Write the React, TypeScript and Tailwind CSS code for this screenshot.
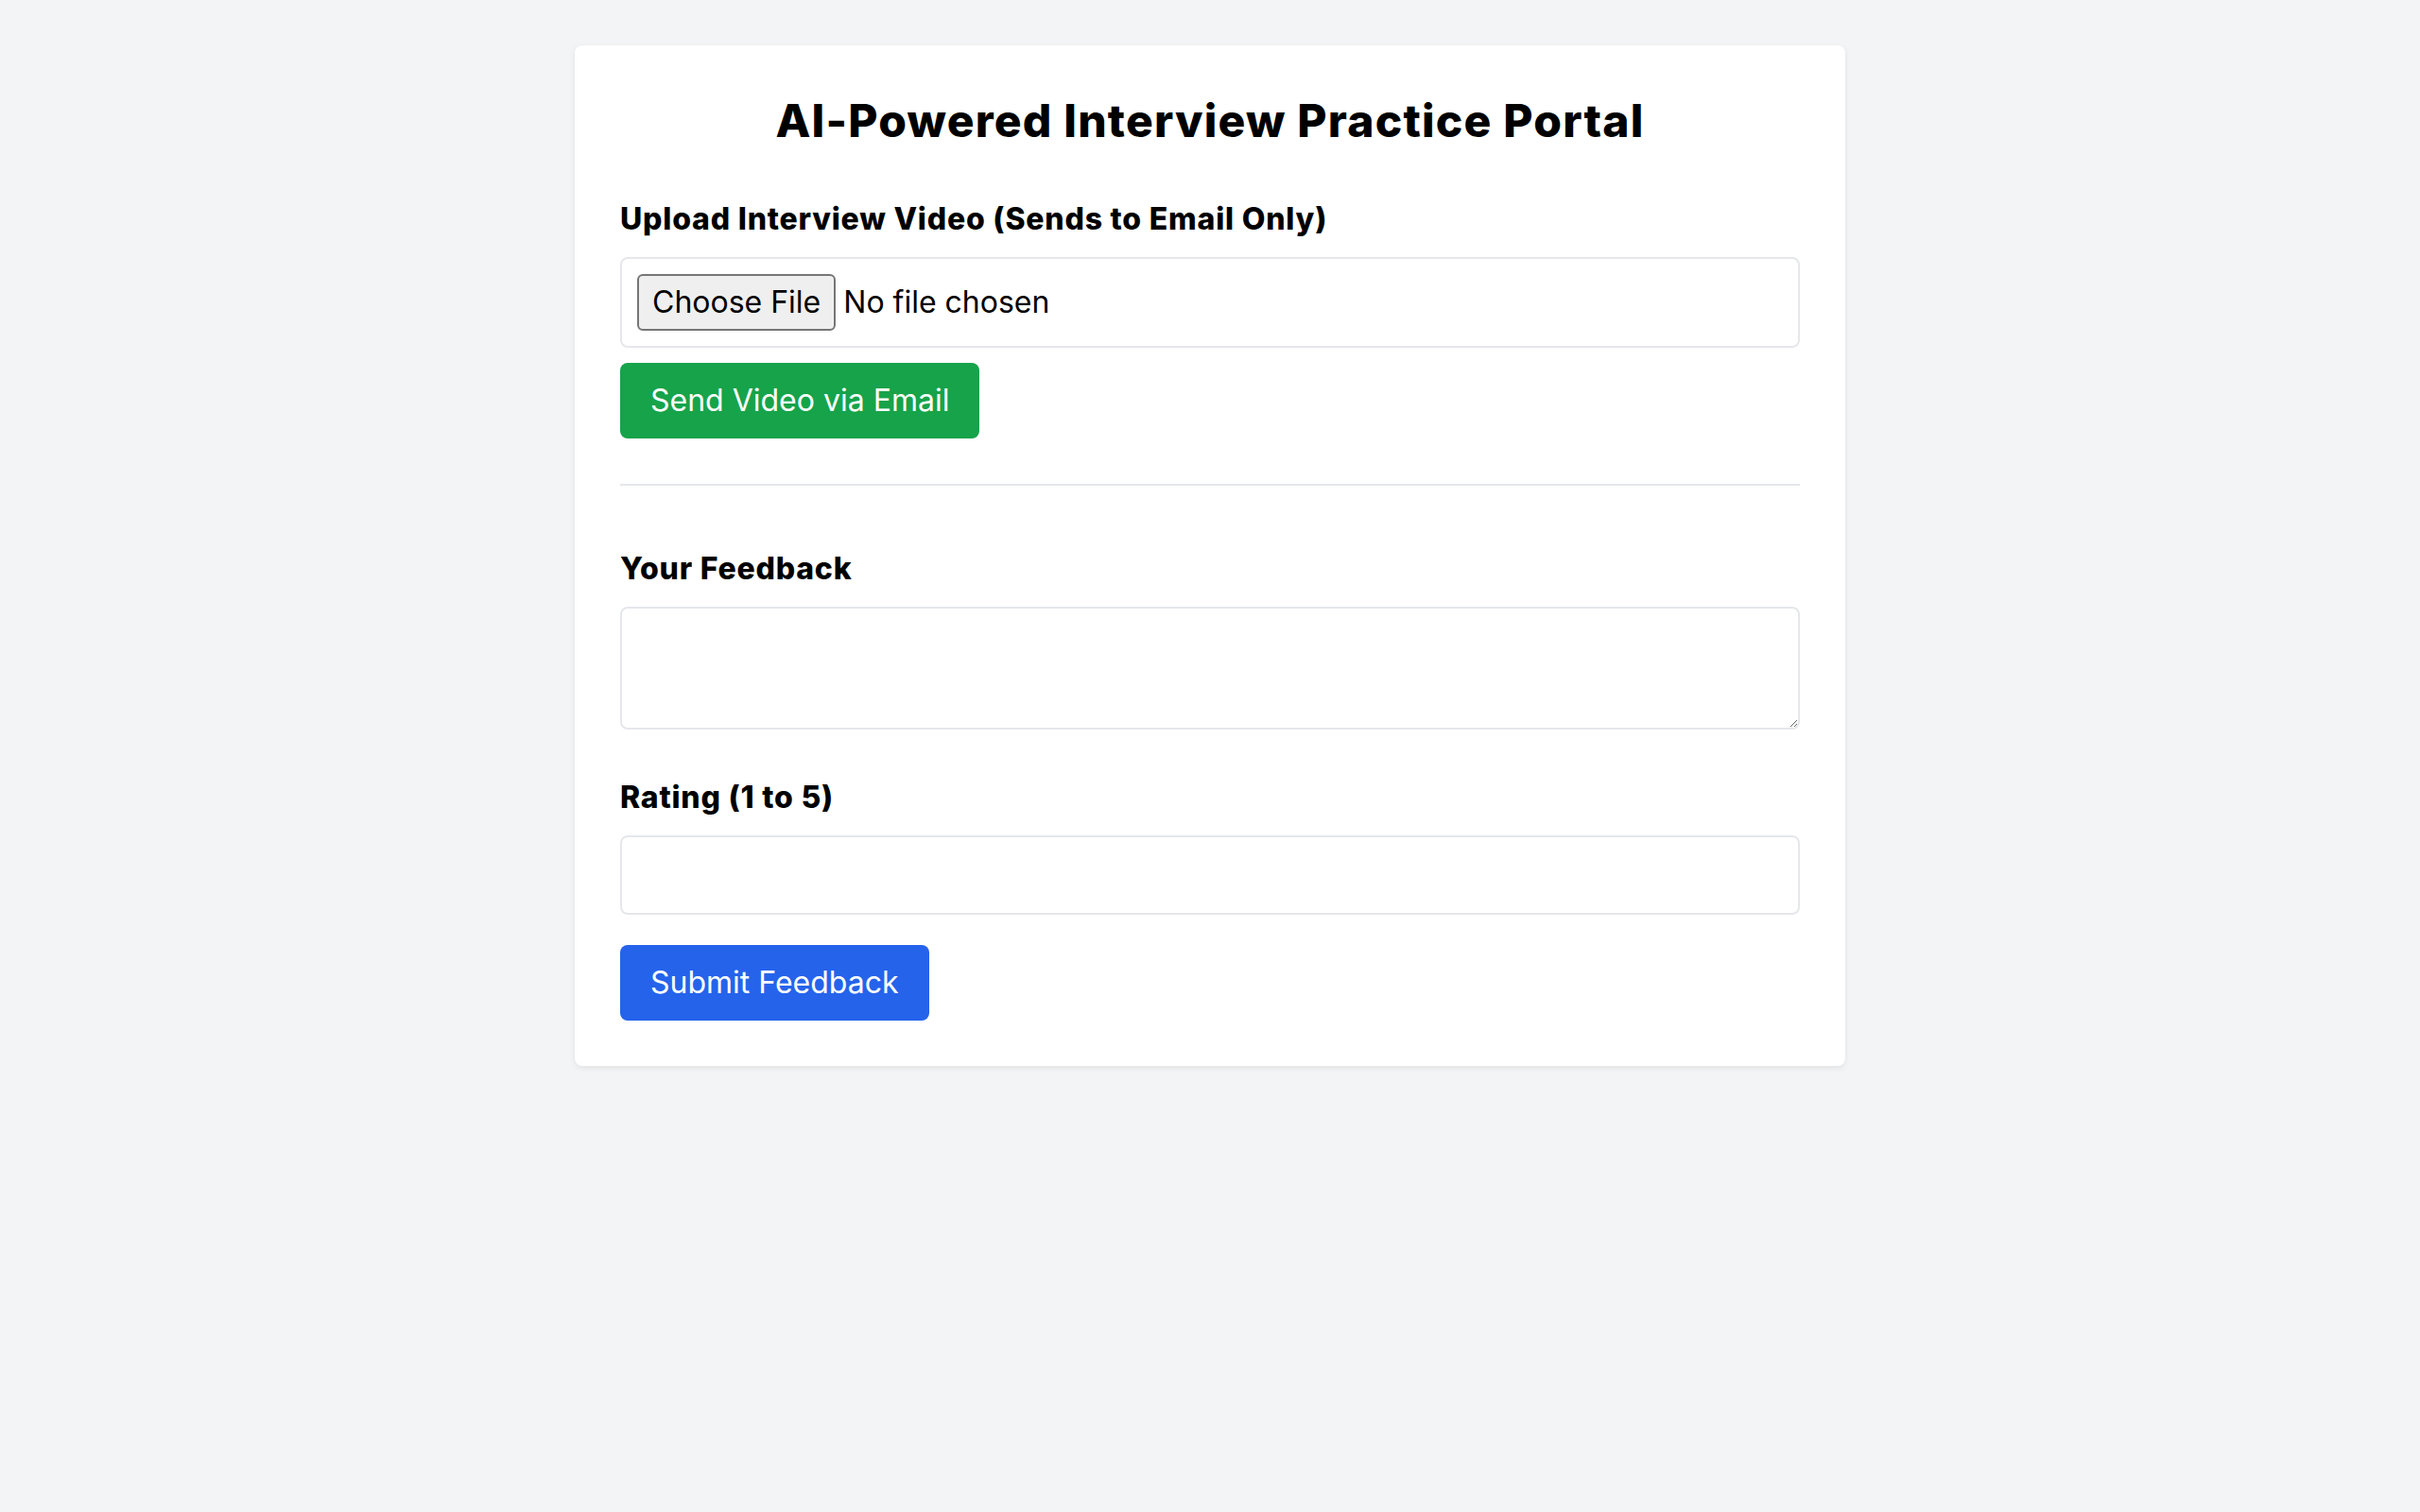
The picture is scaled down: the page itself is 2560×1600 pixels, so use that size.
import { useState } from "react";

export default function App() {
  const [feedback, setFeedback] = useState("");
  const [rating, setRating] = useState("");

  return (
    <div className="min-h-screen bg-[#f3f4f6] px-12 pt-12 font-['Inter',_'Noto_Sans',_sans-serif] text-[32px] leading-12 text-black">
      <div className="mx-auto max-w-[1344px] rounded-lg bg-white p-12 shadow-[0_2px_6px_rgba(0,0,0,0.08)]">
        <h1 className="mb-12 text-center text-5xl leading-16 font-extrabold tracking-wide">
          AI-Powered Interview Practice Portal
        </h1>

        <div>
          <label className="mb-4 block font-extrabold tracking-wide">Upload Interview Video (Sends to Email Only)</label>
          <input
            type="file"
            accept="video/*"
            className="block w-full rounded-lg border-2 border-[#e5e7eb] p-4 file:mr-2 file:rounded-[6px] file:border-2 file:border-[#767676] file:bg-[#efefef] file:px-3.5 file:py-[4px]"
          />
          <button type="button" className="mt-4 rounded-lg bg-[#16a34a] px-8 py-4 text-white">
            Send Video via Email
          </button>
        </div>

        <hr className="my-12 border-t-2 border-[#e5e7eb]" />

        <div className="pt-4">
          <label className="mb-4 block font-extrabold tracking-wide">Your Feedback</label>
          <textarea
            rows={2}
            value={feedback}
            onChange={(e) => setFeedback(e.target.value)}
            className="mb-12 block h-[130px] w-full rounded-lg border-2 border-[#e5e7eb] p-4"
          />
          <label className="mb-4 block font-extrabold tracking-wide">Rating (1 to 5)</label>
          <input
            type="number"
            min={1}
            max={5}
            value={rating}
            onChange={(e) => setRating(e.target.value)}
            className="mb-8 block w-full rounded-lg border-2 border-[#e5e7eb] p-4"
          />
          <button type="button" className="rounded-lg bg-[#2563eb] px-8 py-4 text-white">
            Submit Feedback
          </button>
        </div>
      </div>
    </div>
  );
}
